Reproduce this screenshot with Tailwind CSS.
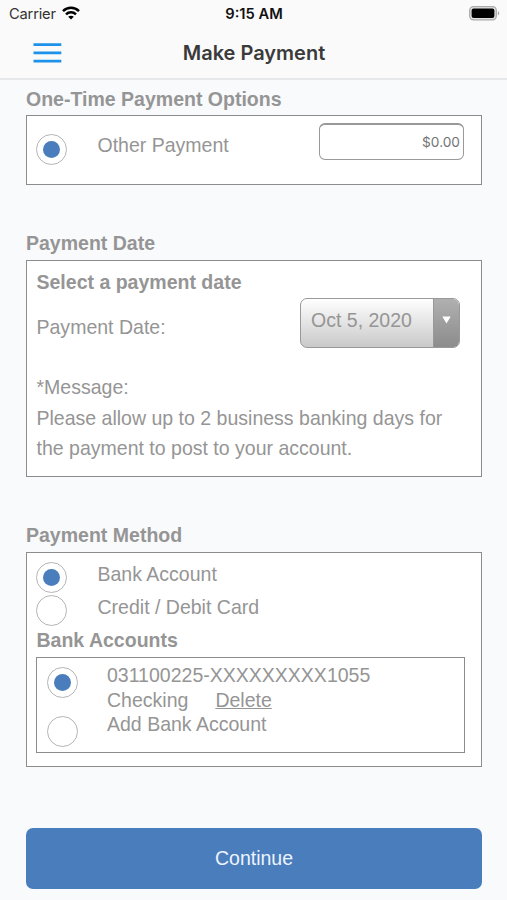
<!DOCTYPE html>
<html lang="en">

<head>
  <meta charset="UTF-8" />
  <title>Make Payment</title>
  <meta name="viewport" content="width=device-width, initial-scale=1.0" />
  <script src="https://cdn.jsdelivr.net/npm/@tailwindcss/browser@4"></script>
</head>

<body class="h-[900px] overflow-hidden bg-[#f9fafc] font-['Liberation_Sans',Arial,sans-serif] text-[19.53px] leading-[24px] text-[#959595]">

  <!-- Status bar + nav -->
  <header class="h-[80px] bg-[#fafafa] border-b-2 border-[#e7e8e9] font-[Inter,sans-serif]">
    <div class="h-[27px] grid grid-cols-3 items-center pl-[8px] pr-[7px] text-[14.7px] text-[#222]">
      <div class="flex items-center gap-[6px] pl-px">
        <span class="text-[#333] tracking-[-0.2px]">Carrier</span>
        <svg class="w-[18px] h-[14px] -mt-[2px]" viewBox="0 0 18 14" fill="none" stroke="#000" stroke-width="2.5">
          <path d="M1 5.2C5.5 .7 12.5 .7 17 5.2" />
          <path d="M4 8.3C6.8 5.5 11.2 5.5 14 8.3" />
          <path d="M9 13.6L6.2 10.8C7.8 9.3 10.2 9.3 11.8 10.8Z" fill="#000" stroke="none" />
        </svg>
      </div>
      <span class="text-center font-semibold text-[#111] whitespace-nowrap">9:15 AM</span>
      <svg class="w-[31px] h-[15px] justify-self-end" viewBox="0 0 31 15">
        <rect x=".7" y=".7" width="26.6" height="13.2" rx="3.8" fill="#e2e2e2" stroke="#aaa" stroke-width="1.3" />
        <rect x="2.6" y="2.5" width="22.8" height="9.6" rx="2" fill="#000" />
        <path d="M28.8 5.2C30.8 5.8 30.8 8.8 28.8 9.4Z" fill="#aaa" />
      </svg>
    </div>
    <div class="h-[51px] grid grid-cols-[1fr_auto_1fr] items-center pl-[33px] pr-[32px]">
      <svg class="w-[29px] h-[20px]" viewBox="0 0 29 20" stroke="#1c92ea" stroke-width="2.7">
        <path d="M.5 1.6H28.3M.5 9.8H28.3M.5 18.2H28.3" />
      </svg>
      <h1 class="text-[20px] font-semibold text-[#3a3a3a]">Make Payment</h1>
    </div>
  </header>

  <main class="pl-[26px] pr-[25px] pt-[7px]">

    <!-- One-time payment -->
    <h2 class="font-bold">One-Time Payment Options</h2>
    <section class="mt-[4px] h-[70px] flex items-start bg-white border border-[#8c8c8c] pl-[9px] pr-[17px]">
      <span class="mt-[17.5px] size-[31px] rounded-full border border-[#b5b5b5] flex items-center justify-center"><span class="size-[17px] rounded-full bg-[#4a7dbc]"></span></span>
      <span class="mt-[17px] ml-[30.5px]">Other Payment</span>
      <div class="mt-[7px] ml-auto w-[145px] h-[37px] rounded-[6px] border border-t-2 border-[#999] flex items-center justify-end pr-[3px] pb-px font-[Inter,sans-serif] text-[13.7px] text-[#747474]">$0.00</div>
    </section>

    <!-- Payment date -->
    <h2 class="mt-[46px] font-bold">Payment Date</h2>
    <section class="mt-[5px] h-[217px] bg-white border border-[#8c8c8c] pl-[9.5px] pr-[21px]">
      <h3 class="mt-[9px] font-bold">Select a payment date</h3>
      <div class="mt-[4px] flex items-start justify-between">
        <span class="mt-[17px]">Payment Date:</span>
        <div class="w-[160px] h-[50px] rounded-[7px] border border-[#999] overflow-hidden flex bg-linear-to-b from-white to-[#c9c9c9]">
          <span class="flex-1 pl-[10px] pt-[9px]">Oct 5, 2020</span>
          <span class="w-[26px] border-l border-[#999] bg-linear-to-b from-[#b0b0b0] to-[#8c8c8c] flex justify-center">
            <svg class="w-[9px] h-[8px] mt-[17px]" viewBox="0 0 9 8"><path d="M.3 .5H8.7L4.5 7.5Z" fill="#fff" /></svg>
          </span>
        </div>
      </div>
      <p class="mt-[24px] leading-[30.7px] whitespace-nowrap">*Message:<br />Please allow up to 2 business banking days for<br />the payment to post to your account.</p>
    </section>

    <!-- Payment method -->
    <h2 class="mt-[46px] font-bold">Payment Method</h2>
    <section class="mt-[5px] h-[215px] bg-white border border-[#8c8c8c] pl-[9px] pr-[16px]">
      <div class="mt-[9px] h-[33px] flex items-start">
        <span class="size-[31px] rounded-full border border-[#b5b5b5] flex items-center justify-center"><span class="size-[17px] rounded-full bg-[#4a7dbc]"></span></span>
        <span class="ml-[30.5px]">Bank Account</span>
      </div>
      <div class="h-[33px] flex items-start">
        <span class="size-[31px] rounded-full border border-[#b5b5b5]"></span>
        <span class="ml-[30.5px]">Credit / Debit Card</span>
      </div>
      <h3 class="pl-[0.5px] font-bold">Bank Accounts</h3>

      <div class="mt-[5px] h-[96px] border border-[#8c8c8c] pl-[9.5px] pt-[5px] flex">
        <div class="pt-[4px] flex flex-col gap-[18px]">
          <span class="size-[31px] rounded-full border border-[#b5b5b5] flex items-center justify-center"><span class="size-[17px] rounded-full bg-[#4a7dbc]"></span></span>
          <span class="size-[31px] rounded-full border border-[#b5b5b5]"></span>
        </div>
        <div class="ml-[29.5px] leading-[24.5px]">
          <p>031100225-XXXXXXXXX1055</p>
          <p class="flex gap-[27px]">Checking <a class="underline">Delete</a></p>
          <p>Add Bank Account</p>
        </div>
      </div>
    </section>

    <button class="mt-[60.5px] block w-full h-[61px] rounded-[7px] bg-[#4a7dbc] text-[#edf4ff] pb-px">Continue</button>
  </main>
</body>

</html>
